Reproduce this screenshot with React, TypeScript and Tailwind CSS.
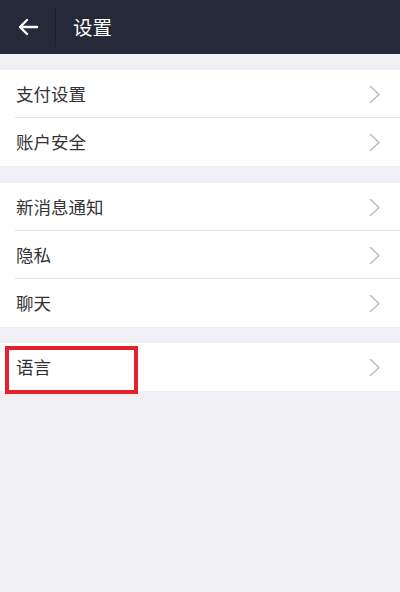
import React from "react";

const font = { fontFamily: '"Noto Sans CJK SC", "Noto Sans", sans-serif' };

function Chevron() {
  return (
    <svg width="12" height="19" viewBox="0 0 12 19" fill="none" className="shrink-0">
      <path d="M1.5 1.5 L10 9.5 L1.5 17.5" stroke="#b9b9be" strokeWidth="1.4" strokeLinecap="round" strokeLinejoin="round" />
    </svg>
  );
}

function Row({ label, last }: { label: string; last?: boolean }) {
  return (
    <div className="relative flex h-[48px] items-center bg-white pl-[16px] pr-[19px]">
      <span className="flex-1 text-[17.5px] text-[#333333]">{label}</span>
      <Chevron />
      {!last && <div className="absolute bottom-0 left-[15px] right-0 h-px bg-[#e4e4e8]" />}
    </div>
  );
}

export default function App() {
  return (
    <div className="relative flex h-[592px] w-[400px] flex-col bg-[#efeff4]" style={font}>
      <div className="flex h-[54px] items-center bg-[#262937]">
        <div className="flex h-full w-[55px] items-center justify-center">
          <svg width="22" height="18" viewBox="0 0 22 18" fill="none">
            <path d="M20 9 H3 M10 2 L3 9 L10 16" stroke="#ffffff" strokeWidth="2.4" strokeLinecap="round" strokeLinejoin="round" />
          </svg>
        </div>
        <div className="h-[38px] w-px bg-[#1d1f2b]" />
        <span className="ml-[17px] text-[19.5px] text-white">设置</span>
      </div>
      <div className="h-[16px]" />
      <Row label="支付设置" />
      <Row label="账户安全" last />
      <div className="h-[17px]" />
      <Row label="新消息通知" />
      <Row label="隐私" />
      <Row label="聊天" last />
      <div className="h-[16px]" />
      <div className="relative">
        <Row label="语言" last />
        <div className="absolute left-[5px] top-[3px] h-[48px] w-[133px] border-[4px] border-[#e3202b]" />
      </div>
    </div>
  );
}
